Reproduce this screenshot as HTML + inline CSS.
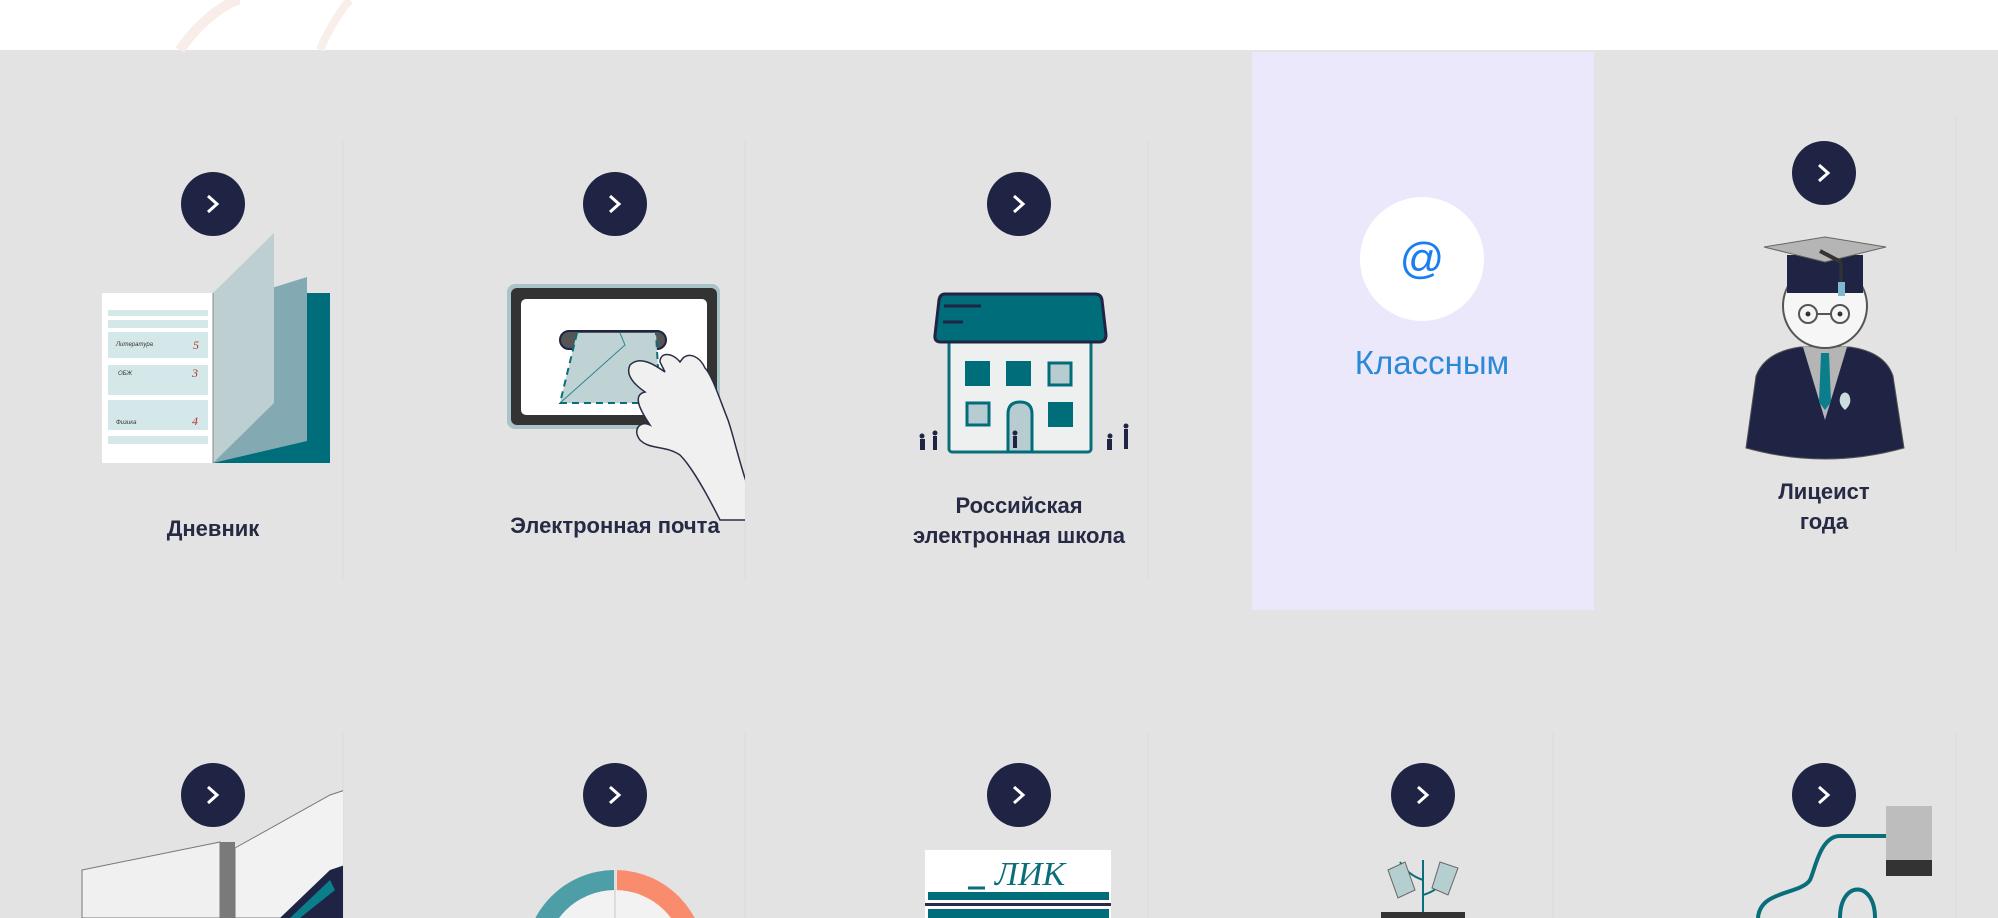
<!DOCTYPE html>
<html><head><meta charset="utf-8"><style>
html,body{margin:0;padding:0;}
body{width:1998px;height:918px;overflow:hidden;background:#e3e3e3;position:relative;font-family:"Liberation Sans",sans-serif;}
.top{position:absolute;left:0;top:0;width:1998px;height:50px;background:#fff;}
.lbl{position:absolute;color:#262a44;font-weight:bold;font-size:22px;text-align:center;line-height:30px;width:400px;}
svg{position:absolute;left:0;top:0;}
</style></head><body>
<div class="top"></div>
<svg width="1998" height="918" viewBox="0 0 1998 918">
<defs>
<g id="btn"><circle r="32" fill="#1f2444"/><path d="M-5,-8 L4,0 L-5,8" stroke="#fff" stroke-width="3" fill="none"/></g>
<clipPath id="c2"><rect x="345" y="0" width="400" height="918"/></clipPath>
<clipPath id="c1"><rect x="0" y="0" width="343" height="918"/></clipPath>
</defs>
<path d="M180,50 C200,20 230,0 240,0" stroke="#f8ede8" stroke-width="10" fill="none"/>
<path d="M320,50 C330,25 345,5 350,0" stroke="#f8efea" stroke-width="8" fill="none"/>
<rect x="1252" y="52" width="342" height="558" fill="#ebe8fc"/>
<g stroke="#dbdbdb" stroke-width="1">
<line x1="343" y1="140" x2="343" y2="580"/><line x1="745" y1="140" x2="745" y2="580"/><line x1="1148" y1="140" x2="1148" y2="580"/><line x1="1956" y1="115" x2="1956" y2="550"/>
<line x1="343" y1="733" x2="343" y2="918"/><line x1="745" y1="733" x2="745" y2="918"/><line x1="1148" y1="733" x2="1148" y2="918"/><line x1="1553" y1="733" x2="1553" y2="918"/><line x1="1956" y1="733" x2="1956" y2="918"/>
</g>
<use href="#btn" x="213" y="204"/><use href="#btn" x="615" y="204"/><use href="#btn" x="1019" y="204"/><use href="#btn" x="1824" y="173"/>
<use href="#btn" x="213" y="795"/><use href="#btn" x="615" y="795"/><use href="#btn" x="1019" y="795"/><use href="#btn" x="1423" y="795"/><use href="#btn" x="1824" y="795"/>
<!-- book -->
<rect x="102" y="293" width="111" height="170" fill="#fff"/>
<g fill="#d5e8e9"><rect x="108" y="310" width="100" height="6"/><rect x="108" y="320" width="100" height="8"/><rect x="108" y="332" width="100" height="26"/><rect x="108" y="365" width="100" height="30"/><rect x="108" y="400" width="100" height="30"/><rect x="108" y="436" width="100" height="8"/></g>
<g fill="#b5332e" font-size="12" font-style="italic" font-family="Liberation Serif,serif"><text x="193" y="349">5</text><text x="192" y="377">3</text><text x="192" y="425">4</text></g>
<g fill="#333" font-size="6" font-style="italic"><text x="116" y="346">Литература</text><text x="118" y="375">ОБЖ</text><text x="116" y="424">Физика</text></g>
<rect x="213" y="293" width="117" height="170" fill="#006d7b"/>
<polygon points="213,463 307,441 307,277 275,287 213,293" fill="#83aab2"/>
<polygon points="213,293 274,233 274,403 213,463" fill="#bdcfd1"/>
<line x1="213" y1="293" x2="213" y2="463" stroke="#888" stroke-width="1"/>
<!-- tablet -->
<rect x="507" y="284" width="213" height="145" rx="8" fill="#a8c4c8"/>
<rect x="511" y="288" width="206" height="137" rx="6" fill="#333"/>
<rect x="521" y="299" width="186" height="116" rx="5" fill="#fff"/>
<rect x="560" y="331" width="106" height="18" rx="9" fill="#555" stroke="#1f2444" stroke-width="2"/>
<polygon points="577,333 656,333 660,403 560,403" fill="#bfd3d4"/>
<polyline points="560,403 625,345 620,333" stroke="#2a8894" stroke-width="1" fill="none"/>
<polyline points="577,333 560,403 660,403 656,333" stroke="#0a6e7a" stroke-width="2" stroke-dasharray="7,5" fill="none"/>
<g clip-path="url(#c2)">
<path d="M630,365 C640,355 655,365 665,372 L660,362 C660,352 672,352 680,362 L683,358 C690,352 700,357 705,368 C712,375 720,400 728,420 C735,440 740,470 760,520 L720,520 C705,490 690,465 680,455 C665,445 650,450 640,440 C632,430 640,420 650,425 C640,410 632,395 645,392 C635,385 625,375 630,365 Z" fill="#f0f0f0" stroke="#2a2d45" stroke-width="1.5"/>
</g>
<!-- house -->
<rect x="949" y="340" width="142" height="112" rx="3" fill="#eef0f0" stroke="#0a6e7a" stroke-width="3"/>
<path d="M945,294 L1095,294 Q1101,294 1102,300 L1106,335 Q1106,342 1099,342 L941,342 Q934,342 935,335 L939,300 Q940,294 945,294 Z" fill="#006d7b" stroke="#1f2444" stroke-width="3"/>
<line x1="944" y1="306" x2="981" y2="306" stroke="#1f2444" stroke-width="3"/><line x1="943" y1="322" x2="963" y2="322" stroke="#1f2444" stroke-width="3"/>
<g fill="#006d7b"><rect x="965" y="361" width="25" height="25"/><rect x="1006" y="361" width="25" height="25"/><rect x="1048" y="402" width="25" height="25"/></g>
<g fill="#b7ccd0" stroke="#006d7b" stroke-width="3"><rect x="1049" y="363" width="22" height="22"/><rect x="967" y="403" width="22" height="22"/><path d="M1008,452 L1008,414 Q1008,402 1020,402 Q1032,402 1032,414 L1032,452 Z"/></g>
<g fill="#1f2444"><circle cx="1015" cy="433" r="2.5"/><rect x="1013" y="436" width="4" height="12"/><circle cx="922" cy="436" r="2.5"/><rect x="920" y="439" width="5" height="11"/><circle cx="935" cy="433" r="2.5"/><rect x="933" y="436" width="4" height="14"/><circle cx="1110" cy="436" r="2.5"/><rect x="1107" y="439" width="5" height="11"/><circle cx="1126" cy="426" r="2.5"/><rect x="1124" y="429" width="4" height="20"/></g>
<circle cx="1422" cy="259" r="62" fill="#fff"/>
<text x="1422" y="273" font-size="44" fill="#1a7ef0" text-anchor="middle" font-family="Liberation Sans,sans-serif">@</text>
<text x="1432" y="374" font-size="33" fill="#2b8ad6" text-anchor="middle" font-family="Liberation Sans,sans-serif">Классным</text>
<!-- graduate -->
<path d="M1746,448 L1756,376 Q1765,352 1800,347 L1850,347 Q1885,352 1893,376 L1904,448 Q1825,470 1746,448 Z" fill="#1f2444" stroke="#555" stroke-width="1"/>
<polygon points="1803,347 1847,347 1825,420" fill="#b5b5b5"/>
<polygon points="1821,353 1829,353 1831,402 1825,410 1819,402" fill="#0a7e8a"/>
<path d="M1841,395 q4,-5 8,0 q4,8 -4,15 q-8,-7 -4,-15z" fill="#cdd"/>
<circle cx="1825" cy="306" r="42" fill="#f6f6f6" stroke="#555" stroke-width="2"/>
<rect x="1787" y="255" width="76" height="38" fill="#1f2444"/>
<polygon points="1764,247 1825,237 1886,247 1825,262" fill="#b5b5b5" stroke="#666" stroke-width="1"/>
<line x1="1820" y1="251" x2="1841" y2="262" stroke="#333" stroke-width="4"/><line x1="1841" y1="262" x2="1841" y2="285" stroke="#333" stroke-width="3"/><rect x="1838" y="282" width="7" height="14" fill="#7fb9cf"/>
<g fill="none" stroke="#555" stroke-width="2"><circle cx="1808" cy="314" r="9"/><circle cx="1840" cy="314" r="9"/><line x1="1817" y1="314" x2="1831" y2="314"/></g>
<circle cx="1808" cy="314" r="2.5" fill="#333"/><circle cx="1840" cy="314" r="2.5" fill="#333"/>
<!-- row 2 -->
<g clip-path="url(#c1)">
<polygon points="82,870 220,842 220,918 82,918" fill="#f0f0f0" stroke="#777"/>
<rect x="220" y="842" width="15" height="76" fill="#7a7a7a"/>
<polygon points="235,848 330,795 345,790 345,918 235,918" fill="#f2f2f2" stroke="#777"/>
<polygon points="280,918 330,870 345,865 345,918" fill="#1f2444"/><polygon points="290,918 330,880 335,890 300,918" fill="#0a7e8a"/>
</g>
<path d="M525,960 A90,90 0 0 1 614,870 L614,960 Z" fill="#4d9ea6"/>
<path d="M617,870 A90,90 0 0 1 705,960 L617,960 Z" fill="#f88c6c"/>
<circle cx="615" cy="960" r="70" fill="#f2f2f2"/>
<line x1="615" y1="870" x2="615" y2="918" stroke="#ddd" stroke-width="2"/>
<rect x="925" y="850" width="186" height="68" fill="#fff"/>
<text x="1030" y="885" font-size="34" font-style="italic" fill="#0a6e7a" text-anchor="middle" font-family="Liberation Serif,serif">ЛИК</text>
<line x1="968" y1="888" x2="985" y2="888" stroke="#0a6e7a" stroke-width="3"/>
<rect x="928" y="892" width="181" height="8" fill="#006d7b"/><rect x="925" y="903" width="186" height="3" fill="#2a2d45"/><rect x="928" y="909" width="181" height="9" fill="#006d7b"/>
<g stroke="#0a6e7a" stroke-width="2" fill="none"><path d="M1423,918 L1423,860 M1423,895 Q1440,890 1448,875 M1423,880 Q1408,875 1400,862"/></g>
<polygon points="1388,870 1405,862 1415,890 1398,898" fill="#b5cfd1" stroke="#666"/><polygon points="1432,888 1440,862 1458,868 1448,895" fill="#b5cfd1" stroke="#666"/>
<rect x="1381" y="912" width="84" height="6" fill="#333"/>
<rect x="1886" y="806" width="46" height="65" fill="#bdbdbd"/><rect x="1886" y="860" width="46" height="16" fill="#333"/>
<path d="M1886,836 L1840,836 C1820,836 1815,870 1810,880 C1800,895 1760,890 1758,918" stroke="#0a6e7a" stroke-width="4" fill="none"/>
<path d="M1840,918 C1840,880 1875,880 1875,918" stroke="#0a6e7a" stroke-width="4" fill="none"/>
</svg>
<div class="lbl" style="left:13px;top:514px;">Дневник</div>
<div class="lbl" style="left:415px;top:511px;">Электронная почта</div>
<div class="lbl" style="left:819px;top:491px;">Российская<br>электронная школа</div>
<div class="lbl" style="left:1624px;top:477px;">Лицеист<br>года</div>
</body></html>
